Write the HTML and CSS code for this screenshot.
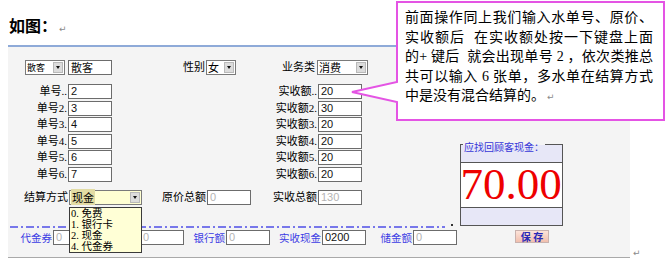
FILE: index.html
```html
<!DOCTYPE html>
<html lang="zh-CN">
<head>
<meta charset="utf-8">
<title>如图</title>
<link rel="stylesheet" href="styles.css">
</head>
<body>
<div class="page">
  <h1 class="heading">如图：<span class="ret">↵</span></h1>

  <div class="shot">
    <div class="panel">
      <div class="main">
        <div class="left">
          <div class="row1">
            <span class="sel sel-type"><span class="sel-text small">散客</span><span class="arrow"></span></span>
            <span class="inp inp-name">散客</span>
            <span class="lbl lbl-sex">性别</span>
            <span class="sel sel-sex"><span class="sel-text">女</span><span class="arrow"></span></span>
            <span class="lbl lbl-biz">业务类</span>
            <span class="sel sel-biz"><span class="sel-text">消费</span><span class="arrow"></span></span>
          </div>

          <div class="orders">
            <span class="lbl">单号..</span><span class="inp">2</span><span class="lbl">实收额..</span><span class="inp">20</span>
            <span class="lbl">单号2.</span><span class="inp">3</span><span class="lbl">实收额2.</span><span class="inp">30</span>
            <span class="lbl">单号3.</span><span class="inp">4</span><span class="lbl">实收额3.</span><span class="inp">20</span>
            <span class="lbl">单号4.</span><span class="inp">5</span><span class="lbl">实收额4.</span><span class="inp">20</span>
            <span class="lbl">单号5.</span><span class="inp">6</span><span class="lbl">实收额5.</span><span class="inp">20</span>
            <span class="lbl">单号6.</span><span class="inp">7</span><span class="lbl">实收额6.</span><span class="inp">20</span>
          </div>

          <div class="settle">
            <span class="lbl w-pay">结算方式</span>
            <div class="paywrap">
              <span class="sel sel-pay"><span class="sel-text"><span class="hl">现金</span></span><span class="arrow"></span></span>
              <ul class="dropdown">
                <li>0. 免费</li>
                <li>1. 银行卡</li>
                <li>2. 现金</li>
                <li>4. 代金券</li>
              </ul>
            </div>
            <span class="lbl w-orig">原价总额</span><span class="inp dim">0</span>
            <span class="lbl w-real">实收总额</span><span class="inp dim">130</span>
          </div>

          <div class="dash"></div>
        </div>

        <div class="change">
          <span class="legend">应找回顾客现金：</span>
          <div class="band"></div>
          <div class="amount">70.00</div>
          <div class="band"></div>
        </div>
      </div>

      <div class="bottom">
        <span class="blbl w-coupon">代金券</span><span class="inp dim">0</span>
        <span class="blbl w-hidden">会员卡</span><span class="inp dim">0</span>
        <span class="blbl w-bank">银行额</span><span class="inp dim">0</span>
        <span class="blbl w-cash">实收现金</span><span class="inp">0200</span>
        <span class="blbl w-store">储金额</span><span class="inp dim">0</span>
        <button class="save" type="button">保 存</button>
      </div>
    </div>
    <span class="ret ret-panel">↵</span>
  </div>

  <div class="callout">
    <svg class="callout-shape" width="316" height="124" viewBox="0 0 316 124" aria-hidden="true">
      <path d="M47 2 H314 V120 H47 V102 L2 92 L47 82 Z" fill="#fff" stroke="#e454e4" stroke-width="2"/>
    </svg>
    <div class="callout-text">
      <div class="cl">前面操作同上我们输入水单号、原价、</div>
      <div class="cl">实收额后&nbsp; 在实收额处按一下键盘上面</div>
      <div class="cl">的+ 键后&nbsp; 就会出现单号 2 ，依次类推总</div>
      <div class="cl">共可以输入 6 张单，多水单在结算方式</div>
      <div class="cl-last">中是没有混合结算的。<span class="ret">↵</span></div>
    </div>
  </div>
</div>
</body>
</html>
```

FILE: styles.css
```css
* { box-sizing: border-box; }

html, body { margin: 0; padding: 0; }

body {
  width: 666px;
  height: 260px;
  overflow: hidden;
  background: #fff;
  color: #000;
  font-family: "Liberation Serif", "Noto Sans CJK SC", serif;
  font-size: 11px;
}

.page {
  position: relative;
  width: 666px;
  height: 260px;
}

.heading {
  margin: 0;
  height: 34px;
  padding: 16px 0 0 9px;
  font: bold 16px/18px "Noto Sans CJK SC", sans-serif;
}

.ret {
  font-family: "DejaVu Sans", sans-serif;
  font-weight: normal;
  font-size: 9px;
  color: #8a8a8a;
  margin-left: 2px;
}

.shot {
  display: flex;
  align-items: flex-end;
  margin-top: 11px;
}

.ret-panel {
  margin: 0 0 0 3px;
  line-height: 9px;
}

.panel {
  margin-left: 8px;
  width: 622px;
  background: #f4f4f4;
  border-top: 2px solid #8eaad8;
  border-bottom: 1px solid #a9a9a9;
  padding: 13px 0 12px;
}

.main {
  display: grid;
  grid-template-columns: 444px 119px;
}

/* generic controls */
.lbl {
  line-height: 15px;
  white-space: nowrap;
}

.inp {
  display: block;
  width: 44px;
  height: 15px;
  border: 1px solid #6c6c6c;
  background: #fff;
  padding-left: 2px;
  font: 11px/13px "Liberation Sans", "Noto Sans CJK SC", sans-serif;
  color: #111;
  white-space: nowrap;
}

.inp.dim { color: #b4b4b4; }

.sel {
  display: flex;
  align-items: center;
  height: 15px;
  border: 1px solid #7a7a7a;
  background: #fff;
  font: 11px/13px "Noto Sans CJK SC", sans-serif;
}

.sel-text {
  flex: 1;
  padding-left: 1px;
  white-space: nowrap;
}

.sel-text.small { font-size: 9px; }

.arrow {
  position: relative;
  flex: none;
  width: 10px;
  height: 11px;
  margin-right: 1px;
  background: #dcdcdc;
  border: 1px solid #b9b9b9;
}

.arrow::after {
  content: "";
  position: absolute;
  left: 2px;
  top: 3px;
  border-left: 2px solid transparent;
  border-right: 2px solid transparent;
  border-top: 3px solid #111;
}

/* row 1 */
.row1 {
  display: flex;
  height: 15px;
}

.sel-type { width: 40px; margin-left: 17px; }
.inp-name { margin-left: 3px; font-family: "Noto Sans CJK SC", sans-serif; }
.lbl-sex { width: 94px; text-align: right; padding-right: 1px; }
.sel-sex { width: 30px; }
.lbl-biz { width: 81px; text-align: right; padding-right: 2px; }
.sel-biz { width: 51px; }

/* order rows */
.orders {
  display: grid;
  grid-template-columns: 60px 44px 206px 44px;
  grid-auto-rows: 16.6px;
  margin-top: 9px;
}

.orders .lbl {
  text-align: right;
  padding-right: 1px;
}

/* settle row */
.settle {
  display: flex;
  height: 15px;
  margin-top: 6.4px;
}

.settle .lbl { text-align: right; padding-right: 1px; }
.w-pay { width: 61px; }
.w-orig { width: 65px; }
.w-real { width: 67px; }

.paywrap { position: relative; }

.sel-pay {
  width: 73px;
  background: #ffffd2;
}

.hl {
  background: #e2dca4;
  padding: 0 1px;
}

.dropdown {
  position: absolute;
  left: 0;
  top: 17px;
  z-index: 2;
  width: 73px;
  margin: 0;
  padding: 0 0 0 1px;
  list-style: none;
  background: #ffffd6;
  border: 1px solid #3a3a3a;
  font: 10.5px/11px "Liberation Serif", "Noto Sans CJK SC", serif;
}

.dropdown li {
  height: 11px;
  white-space: nowrap;
}

/* dashed divider */
.dash {
  position: relative;
  width: 435px;
  height: 2px;
  margin: 21px 0 0 2px;
  background: repeating-linear-gradient(90deg, #7777ea 0 8px, transparent 8px 11px, #7777ea 11px 13px, transparent 13px 16px);
}

.dash::after {
  content: "";
  position: absolute;
  left: 441px;
  top: -2px;
  width: 2px;
  height: 2px;
  background: #333;
}

/* change box */
.change {
  position: relative;
  align-self: end;
  width: 103px;
  margin: 0 0 2px 8px;
  border: 1px solid #555;
}

.legend {
  position: absolute;
  left: 2px;
  top: -4px;
  padding: 0 1px;
  font: 10px/12px "Noto Sans CJK SC", sans-serif;
  color: #3838d8;
  white-space: nowrap;
  background: linear-gradient(#f4f4f4 0 4px, #e7e7f7 4px);
}

.band {
  height: 17px;
  background: #e7e7f7;
}

.amount {
  height: 46px;
  border-top: 1px solid #555;
  border-bottom: 1px solid #555;
  background: #fff;
  display: flex;
  align-items: center;
  justify-content: center;
  font: 45px/1 "Liberation Serif", serif;
  color: #ee0000;
  padding-right: 1px;
}

/* bottom row */
.bottom {
  display: flex;
  align-items: flex-start;
  height: 15px;
  margin-top: 2px;
}

.blbl {
  text-align: right;
  padding-right: 1px;
  font: 10.5px/15px "Noto Sans CJK SC", sans-serif;
  color: #3c3ce4;
  white-space: nowrap;
}

.w-coupon { width: 45px; }
.w-hidden { width: 43px; }
.w-bank { width: 42px; }
.w-cash { width: 52px; }
.w-store { width: 47px; }

.save {
  width: 34px;
  height: 13px;
  margin-left: 58px;
  padding: 0;
  border: 1px solid #c9b2ae;
  background: linear-gradient(#fde4da, #f1bfae);
  font: bold 10px/11px "Noto Sans CJK SC", sans-serif;
  color: #2a2ab8;
}

/* callout */
.callout {
  position: absolute;
  left: 350px;
  top: 0;
  width: 316px;
  height: 124px;
}

.callout-shape {
  position: absolute;
  left: 0;
  top: 0;
}

.callout-text {
  position: relative;
  width: 303px;
  padding: 8px 0 0 55px;
  font: 14px/19.5px "Liberation Serif", "Noto Sans CJK SC", serif;
}

.cl {
  text-align: justify;
  text-align-last: justify;
  white-space: nowrap;
}

.cl-last { white-space: nowrap; }
```
